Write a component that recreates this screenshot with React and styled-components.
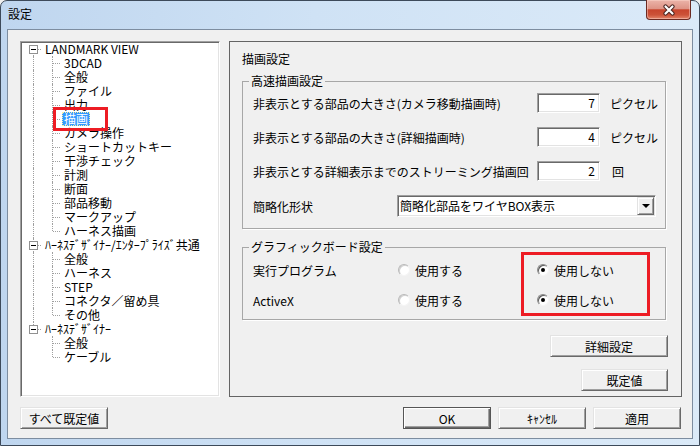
import React from "react";
import styled, { createGlobalStyle, css } from "styled-components";

const GlobalStyle = createGlobalStyle`
  html, body { margin: 0; padding: 0; background: #f0f0f0; }
  body {
    font-family: "Noto Sans CJK JP", "Noto Sans", sans-serif;
    font-size: 12px;
    color: #000;
  }
  * { box-sizing: border-box; }
`;

const Stage = styled.div`
  position: relative;
  width: 700px;
  height: 446px;
  overflow: hidden;
`;

const Window = styled.div`
  width: 700px;
  height: 446px;
  display: flex;
  flex-direction: column;
  border: 1px solid #3d4a5a;
  border-radius: 7px 7px 0 0;
  padding: 0 6px 6px;
  background: linear-gradient(90deg, #bfd6ef 0%, #cfe2f5 45%, #dbeaf8 100%);
`;

const TitleBar = styled.div`
  height: 28px;
  display: flex;
  align-items: flex-start;
  justify-content: space-between;
`;

const Title = styled.div`
  margin: 6px 0 0 1px;
  line-height: 14px;
`;

const CloseButton = styled.div`
  width: 45px;
  height: 20px;
  margin: -1px 2px 0 0;
  border: 1px solid #6b2a22;
  border-top: none;
  border-radius: 0 0 4px 4px;
  background: linear-gradient(180deg, #ebb4a9 0%, #de9486 45%, #c8452d 52%, #cc5238 78%, #e3856a 100%);
  box-shadow: inset 0 0 0 1px rgba(255, 220, 210, 0.45);
  display: flex;
  align-items: center;
  justify-content: center;
`;

const Client = styled.div`
  flex: 1;
  display: flex;
  flex-direction: column;
  border: 1px solid #7d8da0;
  background: #f0f0f0;
  padding: 11px 10px 9px 12px;
`;

const Main = styled.div`
  display: flex;
  gap: 9px;
  height: 356px;
`;

const sunken = css`
  border: 1px solid;
  border-color: #a0a0a0 #fff #fff #a0a0a0;
  box-shadow: inset 1px 1px #696969, inset -1px -1px #e3e3e3;
`;

const TreeBox = styled.div`
  width: 200px;
  flex: none;
  background: #fff;
  padding: 0 1px;
  ${sunken}
`;

const TreeRow = styled.div`
  display: flex;
  align-items: center;
  height: 14px;
  line-height: 12px;
  white-space: nowrap;
`;

const Guide = styled.span`
  position: relative;
  flex: none;
  width: 19px;
  height: 14px;
  display: flex;
  align-items: center;
  &::before {
    content: "";
    position: absolute;
    left: 11px;
    top: ${(p) => (p.$up ? 0 : 7)}px;
    bottom: ${(p) => (p.$down ? 0 : 7)}px;
    border-left: 1px dotted #a0a0a0;
    display: ${(p) => (p.$up || p.$down ? "block" : "none")};
  }
  &::after {
    content: "";
    position: absolute;
    left: 12px;
    right: 0;
    top: 7px;
    border-top: 1px dotted #a0a0a0;
    display: ${(p) => (p.$branch ? "block" : "none")};
  }
`;

const Expander = styled.span`
  position: relative;
  z-index: 1;
  width: 9px;
  height: 9px;
  margin: 1px 0 0 7px;
  border: 1px solid #919191;
  background: #fff;
  &::after {
    content: "";
    position: absolute;
    left: 1px;
    right: 1px;
    top: 3px;
    height: 1px;
    background: #000;
  }
`;

const NodeLabel = styled.span`
  display: block;
  margin-left: 2px;
  padding: 0 1px;
  height: 14px;
  line-height: 12px;
  border: 1px solid transparent;
  ${(p) =>
    p.$selected &&
    css`
      background: #3399ff;
      color: #fff;
      border: 1px dotted #f6f0a8;
    `}
`;

const tree = [
  {
    label: "LANDMARK VIEW",
    children: [
      "3DCAD", "全般", "ファイル", "出力", "描画", "カメラ操作", "ショートカットキー",
      "干渉チェック", "計測", "断面", "部品移動", "マークアップ", "ハーネス描画",
    ],
  },
  {
    label: "ﾊｰﾈｽﾃﾞｻﾞｲﾅｰ/ｴﾝﾀｰﾌﾟﾗｲｽﾞ共通",
    children: ["全般", "ハーネス", "STEP", "コネクタ／留め具", "その他"],
  },
  { label: "ﾊｰﾈｽﾃﾞｻﾞｲﾅｰ", children: ["全般", "ケーブル"] },
];

function SettingsTree() {
  const rows = [];
  tree.forEach((root, ri) => {
    const lastRoot = ri === tree.length - 1;
    rows.push(
      <TreeRow key={`r${ri}`}>
        <Guide $up={ri > 0} $down={!lastRoot} $branch>
          <Expander />
        </Guide>
        <NodeLabel>{root.label}</NodeLabel>
      </TreeRow>
    );
    root.children.forEach((child, ci) => {
      const lastChild = ci === root.children.length - 1;
      rows.push(
        <TreeRow key={`r${ri}c${ci}`}>
          <Guide $up={!lastRoot} $down={!lastRoot} />
          <Guide $up $down={!lastChild} $branch />
          <NodeLabel $selected={ri === 0 && child === "描画"}>{child}</NodeLabel>
        </TreeRow>
      );
    });
  });
  return <TreeBox>{rows}</TreeBox>;
}

const Panel = styled.div`
  flex: 1;
  display: flex;
  flex-direction: column;
  border: 1px solid #646464;
  padding: 10px 15px 0 12px;
`;

const Heading = styled.div`
  line-height: 14px;
`;

const Group = styled.fieldset`
  margin: ${(p) => p.$mt}px 0 0;
  padding: 0;
  min-width: 0;
  border: 1px solid #a7a7a7;
  box-shadow: 1px 1px 0 #fff;
`;

const Legend = styled.legend`
  margin-left: 6px;
  padding: 0 2px;
  line-height: 14px;
  font-size: 12px;
`;

const FieldList = styled.div`
  display: flex;
  flex-direction: column;
  gap: ${(p) => p.$gap}px;
  padding: ${(p) => p.$pad};
`;

const Row = styled.div`
  display: flex;
  align-items: center;
  height: ${(p) => p.$h || 20}px;
`;

const RowLabel = styled.span`
  flex: none;
  width: ${(p) => p.$w}px;
  white-space: nowrap;
`;

const NumInput = styled.input`
  width: 63px;
  height: 20px;
  margin: 0;
  padding: 0 4px 2px;
  font: inherit;
  font-size: 12px;
  text-align: right;
  background: #fff;
  outline: none;
  ${sunken}
`;

const Unit = styled.span`
  margin-left: ${(p) => p.$gap || 10}px;
`;

const Combo = styled.div`
  width: 259px;
  height: 22px;
  display: flex;
  align-items: center;
  justify-content: space-between;
  background: #fff;
  padding: 1px 1px 1px 2px;
  ${sunken}
`;

const ComboText = styled.span`
  white-space: nowrap;
  line-height: 16px;
`;

const raised = css`
  border: 1px solid;
  border-color: #e3e3e3 #696969 #696969 #e3e3e3;
  box-shadow: inset 1px 1px #fff, inset -1px -1px #a0a0a0;
  background: #f0f0f0;
`;

const DropButton = styled.span`
  width: 17px;
  height: 18px;
  display: flex;
  align-items: center;
  justify-content: center;
  ${raised}
  &::after {
    content: "";
    border-style: solid;
    border-width: 4px 4px 0;
    border-color: #000 transparent transparent;
  }
`;

const ChoiceGrid = styled.div`
  display: grid;
  grid-template-columns: 145px 139px 1fr;
  align-items: center;
  height: 20px;
`;

const Choice = styled.label`
  display: flex;
  align-items: center;
  gap: 5px;
  white-space: nowrap;
`;

const RadioMark = styled.span`
  position: relative;
  width: 12px;
  height: 12px;
  border-radius: 50%;
  background: #fff;
  border: 1px solid;
  ${(p) =>
    p.$checked
      ? css`
          border-color: #8a8a8a #f4f4f4 #f4f4f4 #8a8a8a;
          box-shadow: inset 1px 1px #5c5c5c;
          &::after {
            content: "";
            position: absolute;
            left: 3px;
            top: 3px;
            width: 4px;
            height: 4px;
            border-radius: 50%;
            background: #000;
          }
        `
      : css`
          border-color: #b8b8b8 #f4f4f4 #f4f4f4 #b8b8b8;
          box-shadow: inset 1px 1px #d0d0d0;
        `}
`;

const Button = styled.button`
  flex: none;
  width: ${(p) => p.$w || 88}px;
  height: 22px;
  margin: 0;
  padding: 0;
  font: inherit;
  font-size: 12px;
  color: #000;
  ${raised}
  ${(p) =>
    p.$default &&
    css`
      border-color: #555;
      box-shadow: inset 1px 1px #fff, inset -1px -1px #696969, inset -2px -2px #a0a0a0;
    `}
`;

const PanelButton = styled(Button)`
  align-self: flex-end;
  margin: ${(p) => p.$mt}px -2px 0 0;
`;

const Footer = styled.div`
  margin-top: 10px;
  display: flex;
  justify-content: space-between;
`;

const ButtonGroup = styled.div`
  display: flex;
  gap: 7px;
  margin-right: 1px;
`;

const Annotation = styled.div`
  position: absolute;
  left: ${(p) => p.$x}px;
  top: ${(p) => p.$y}px;
  width: ${(p) => p.$w}px;
  height: ${(p) => p.$h}px;
  border: 3px solid #ed1c24;
  pointer-events: none;
`;

const sizeRows = [
  { label: "非表示とする部品の大きさ(カメラ移動描画時)", value: "7", unit: "ピクセル" },
  { label: "非表示とする部品の大きさ(詳細描画時)", value: "4", unit: "ピクセル" },
  { label: "非表示とする詳細表示までのストリーミング描画回", value: "2", unit: "回", gap: 12 },
];

const boardRows = ["実行プログラム", "ActiveX"];

function CloseGlyph() {
  return (
    <svg width="14" height="12" viewBox="0 0 14 12">
      <path d="M3.5 2.5 L10.5 9.5 M10.5 2.5 L3.5 9.5" stroke="#4a2520" strokeWidth="4.2" strokeLinecap="round" />
      <path d="M3.5 2.5 L10.5 9.5 M10.5 2.5 L3.5 9.5" stroke="#fff" strokeWidth="2.2" strokeLinecap="round" />
    </svg>
  );
}

export default function App() {
  return (
    <Stage>
      <GlobalStyle />
      <Window>
        <TitleBar>
          <Title>設定</Title>
          <CloseButton>
            <CloseGlyph />
          </CloseButton>
        </TitleBar>
        <Client>
          <Main>
            <SettingsTree />
            <Panel>
              <Heading>描画設定</Heading>
              <Group $mt={8}>
                <Legend>高速描画設定</Legend>
                <FieldList $gap={14} $pad="5px 0 11px 10px">
                  {sizeRows.map((r) => (
                    <Row key={r.label}>
                      <RowLabel $w={284}>{r.label}</RowLabel>
                      <NumInput readOnly value={r.value} />
                      <Unit $gap={r.gap}>{r.unit}</Unit>
                    </Row>
                  ))}
                  <Row $h={22}>
                    <RowLabel $w={144}>簡略化形状</RowLabel>
                    <Combo>
                      <ComboText>簡略化部品をワイヤBOX表示</ComboText>
                      <DropButton />
                    </Combo>
                  </Row>
                </FieldList>
              </Group>
              <Group $mt={11}>
                <Legend>グラフィックボード設定</Legend>
                <FieldList $gap={10} $pad="6px 0 9px 10px">
                  {boardRows.map((name) => (
                    <ChoiceGrid key={name}>
                      <span>{name}</span>
                      <Choice>
                        <RadioMark />
                        使用する
                      </Choice>
                      <Choice>
                        <RadioMark $checked />
                        使用しない
                      </Choice>
                    </ChoiceGrid>
                  ))}
                </FieldList>
              </Group>
              <PanelButton $w={118} $mt={15}>詳細設定</PanelButton>
              <PanelButton $w={87} $mt={12}>既定値</PanelButton>
            </Panel>
          </Main>
          <Footer>
            <Button $w={88}>すべて既定値</Button>
            <ButtonGroup>
              <Button $default>OK</Button>
              <Button>ｷｬﾝｾﾙ</Button>
              <Button>適用</Button>
            </ButtonGroup>
          </Footer>
        </Client>
      </Window>
      <Annotation $x={53} $y={107} $w={55} $h={24} />
      <Annotation $x={521} $y={252} $w={129} $h={64} />
    </Stage>
  );
}
